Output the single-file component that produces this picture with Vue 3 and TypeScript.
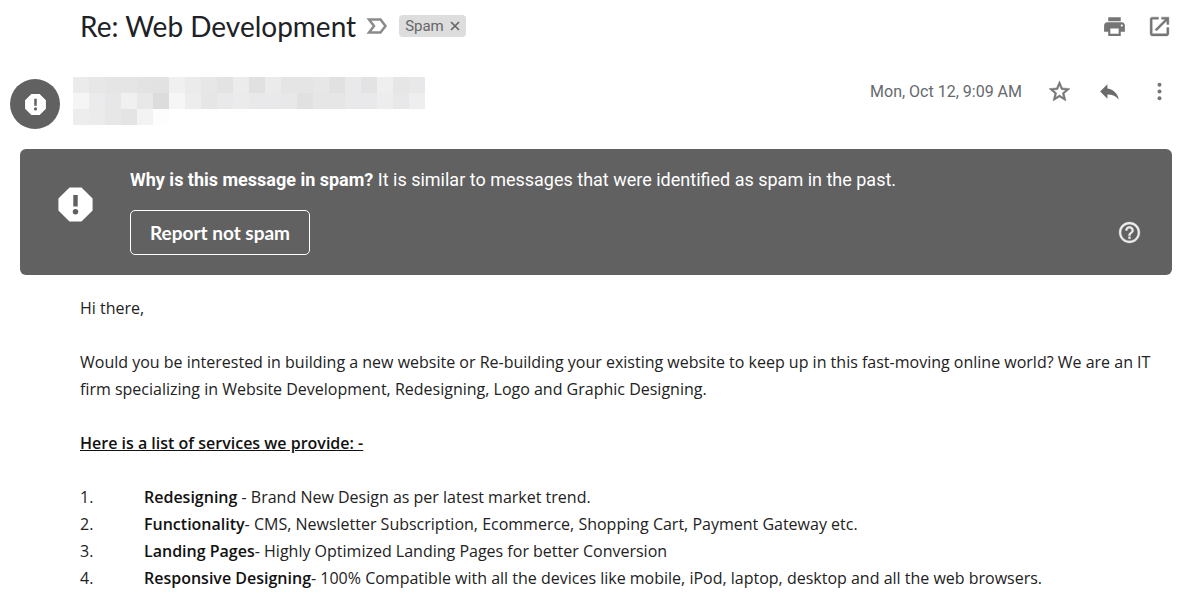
<script setup lang="ts">
interface Service {
  name: string
  text: string
}

const senderRows: string[][] = [
  ['#ebebeb', '#e7e7e7', '#e5e5e5', '#e5e5e5', '#e3e3e3', '#e2e2e2', '#f0f0f0', '#ebebeb', '#e7e7e7', '#e3e3e3', '#ececec', '#e1e1e1', '#ebebeb', '#e5e5e5', '#e5e5e5', '#e7e7e7', '#e1e1e1', '#e9e9eb', '#e3e3e3', '#efefef', '#e6e6e6', '#e8e8ea'],
  ['#f5f5f5', '#ebebed', '#e7e7e7', '#f0f0f0', '#e8e8e8', '#dcdcdc', '#f6f6f6', '#ededed', '#e6e6e6', '#e9e9eb', '#ebebeb', '#e9e9eb', '#e9e9eb', '#e8e8e8', '#e1e1e1', '#e6e6e6', '#e6e6e6', '#e9e9eb', '#e9e9eb', '#ededed', '#e8e8ea', '#eeeeee'],
  ['#ededed', '#ebebeb', '#e7e7e7', '#e4e4e4', '#f3f3f3', '#fdfdfd'],
]

const services: Service[] = [
  { name: 'Redesigning', text: ' - Brand New Design as per latest market trend.' },
  { name: 'Functionality', text: '- CMS, Newsletter Subscription, Ecommerce, Shopping Cart, Payment Gateway etc.' },
  { name: 'Landing Pages', text: '- Highly Optimized Landing Pages for better Conversion' },
  { name: 'Responsive Designing', text: '- 100% Compatible with all the devices like mobile, iPod, laptop, desktop and all the web browsers.' },
]
</script>

<template>
  <main class="mail">
    <header class="subject">
      <h1>Re: Web Development</h1>
      <button class="icon" aria-label="Mark as important">
        <svg width="22" height="18" viewBox="0 0 22 18" fill="none" stroke="#8b8b8b" stroke-width="2.500"><path d="M3 2.500h11.500l5 6.500-5 6.500H3L8 9z" /></svg>
      </button>
      <span class="chip">
        <span>Spam</span>
        <button class="icon" aria-label="Remove label Spam">
          <svg width="10" height="10" viewBox="0 0 10 10" fill="none" stroke="#666" stroke-width="1.700"><path d="M1 1l8 8M9 1L1 9" /></svg>
        </button>
      </span>
      <div class="tools">
        <button class="icon" aria-label="Print">
          <svg width="25" height="25" viewBox="0 0 24 24" fill="#757575"><path d="M19 8H5c-1.660 0-3 1.340-3 3v6h4v4h12v-4h4v-6c0-1.660-1.340-3-3-3zm-3 11H8v-5h8v5zm3-7c-.550 0-1-.450-1-1s.450-1 1-1 1 .450 1 1-.450 1-1 1zm-1-9H6v4h12V3z" /></svg>
        </button>
        <button class="icon" aria-label="Open in new window">
          <svg width="25" height="25" viewBox="0 0 24 24" fill="#757575" stroke="#757575" stroke-width=".4"><path d="M19 19H5V5h6V3H5c-1.110 0-2 .900-2 2v14c0 1.100.890 2 2 2h14c1.100 0 2-.900 2-2v-6h-2v6zM14 3v2h3.590l-9.830 9.830 1.410 1.410L19 6.410V10h2V3h-7z" /></svg>
        </button>
      </div>
    </header>

    <section class="sender">
      <div class="avatar">
        <svg width="25" height="25" viewBox="0 0 24 24" fill="#fff"><path fill-rule="evenodd" d="M8 2h8l6 6v8l-6 6H8l-6-6V8zM10.800 6.400v6.800h2.400V6.400zM12 14.700a1.500 1.500 0 1 0 0 3 1.500 1.500 0 0 0 0-3z" /></svg>
      </div>
      <div class="identity" role="img" aria-label="Hidden sender">
        <div v-for="(row, r) in senderRows" :key="r" class="strip">
          <i v-for="(shade, c) in row" :key="c" :style="{ background: shade }"></i>
        </div>
      </div>
      <div class="meta">
        <time>Mon, Oct 12, 9:09 AM</time>
        <button class="icon" aria-label="Star">
          <svg width="25" height="25" viewBox="0 0 24 24" fill="#757575" stroke="#757575" stroke-width=".5"><path d="M22 9.240l-7.190-.620L12 2 9.190 8.630 2 9.240l5.460 4.730L5.820 21 12 17.270 18.180 21l-1.630-7.030L22 9.240zM12 15.400l-3.760 2.270 1-4.280-3.320-2.880 4.380-.380L12 6.100l1.710 4.040 4.380.380-3.320 2.880 1 4.280L12 15.400z" /></svg>
        </button>
        <button class="icon" aria-label="Reply">
          <svg width="25" height="25" viewBox="0 0 24 24" fill="#6b6b6b"><path d="M10 9V5l-7 7 7 7v-4.100c5 0 8.500 1.600 11 5.100-1-5-4-10-11-11z" /></svg>
        </button>
        <button class="icon" aria-label="More">
          <svg width="25" height="25" viewBox="0 0 24 24" fill="#757575"><circle cx="12" cy="5.500" r="1.900" /><circle cx="12" cy="12" r="1.900" /><circle cx="12" cy="18.500" r="1.900" /></svg>
        </button>
      </div>
    </section>

    <section class="banner">
      <svg class="alert" width="41" height="41" viewBox="0 0 24 24" fill="#fff"><path fill-rule="evenodd" d="M8.500 2h7L22 8.500v7L15.500 22h-7L2 15.500v-7zM10.700 6.500v6.700h2.600V6.500zM12 14.700a1.600 1.600 0 1 0 0 3.200 1.600 1.600 0 0 0 0-3.200z" /></svg>
      <div class="reason">
        <p><b>Why is this message in spam?</b> It is similar to messages that were identified as spam in the past.</p>
        <button class="report">Report not spam</button>
      </div>
      <button class="icon help" aria-label="Help">
        <svg width="25" height="25" viewBox="0 0 24 24" fill="#ececec" stroke="#ececec" stroke-width=".3"><path d="M11 18h2v-2h-2v2zm1-16C6.480 2 2 6.480 2 12s4.480 10 10 10 10-4.480 10-10S17.520 2 12 2zm0 18c-4.410 0-8-3.590-8-8s3.590-8 8-8 8 3.590 8 8-3.590 8-8 8zm0-14c-2.210 0-4 1.790-4 4h2c0-1.100.900-2 2-2s2 .900 2 2c0 2-3 1.750-3 5h2c0-2.250 3-2.500 3-5 0-2.210-1.790-4-4-4z" /></svg>
      </button>
    </section>

    <article class="body">
      <p>Hi there,</p>
      <p>Would you be interested in building a new website or Re-building your existing website to keep up in this fast-moving online world? We are an IT firm specializing in Website Development, Redesigning, Logo and Graphic Designing.</p>
      <p><b><u>Here is a list of services we provide: -</u></b></p>
      <ol>
        <li v-for="(service, i) in services" :key="service.name">
          <span>{{ i + 1 }}.</span>
          <span><b>{{ service.name }}</b>{{ service.text }}</span>
        </li>
      </ol>
    </article>
  </main>
</template>

<style>
body {
  margin: 0;
  background: #fff;
}
</style>

<style scoped>
.mail {
  font-family: Roboto, "Liberation Sans", sans-serif;
  color: #222;
}
button {
  font: inherit;
  cursor: pointer;
}
.icon {
  display: flex;
  padding: 0;
  border: 0;
  background: none;
}
.subject {
  display: flex;
  align-items: center;
  height: 52px;
  padding: 0 20px 0 80px;
}
h1 {
  margin: 0 10px 0 0;
  font: 400 28px/36px Lato, "Open Sans", sans-serif;
  color: #202124;
}
.chip {
  display: flex;
  align-items: center;
  gap: 6px;
  height: 22px;
  margin-left: 11px;
  padding: 0 6px;
  border-radius: 4px;
  background: #ddd;
  color: #666;
  font-size: 15px;
}
.tools {
  display: flex;
  gap: 20px;
  margin-left: auto;
}
.sender {
  display: flex;
  align-items: flex-start;
  padding: 25px 20px 20px 10px;
}
.avatar {
  display: flex;
  align-items: center;
  justify-content: center;
  width: 50px;
  height: 50px;
  margin-top: 2px;
  border-radius: 50%;
  background: #616161;
}
.identity {
  margin-left: 13px;
}
.strip {
  display: flex;
}
.strip i {
  width: 16px;
  height: 16px;
}
.meta {
  display: flex;
  align-items: center;
  gap: 25px;
  height: 29px;
  margin-left: auto;
}
time {
  font-size: 16px;
  color: #666a6e;
}
.banner {
  display: flex;
  margin: 0 20px;
  padding: 20px 30px 20px 35px;
  border-radius: 6px;
  background: #616161;
  color: #fff;
}
.alert {
  align-self: center;
  margin-bottom: 16px;
}
.reason {
  margin-left: 34px;
}
.reason p {
  margin: 0 0 20px;
  font-size: 18px;
  line-height: 21px;
}
.report {
  height: 45px;
  padding: 0 19px;
  border: 1px solid #fff;
  border-radius: 5px;
  background: none;
  color: #fff;
  font: 700 19px/24px Lato, sans-serif;
}
.help {
  align-self: flex-end;
  margin: 0 0 10px auto;
}
.body {
  padding: 20px 20px 0 80px;
  font: 16px/27px "Open Sans", "Noto Sans", sans-serif;
}
.body p {
  margin: 0 0 27px;
}
.body b {
  font-weight: 600;
  color: #111;
}
ol {
  margin: 0;
  padding: 0;
  list-style: none;
}
li {
  display: grid;
  grid-template-columns: 64px 1fr;
}
</style>
